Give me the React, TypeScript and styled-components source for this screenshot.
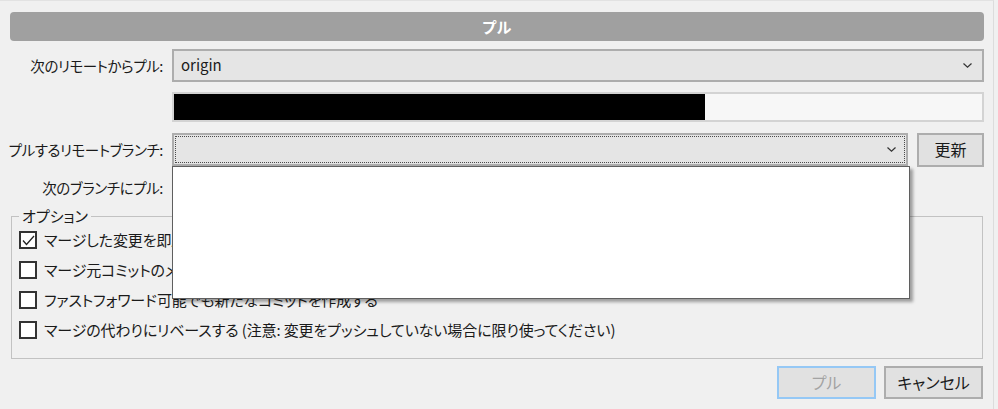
import React from "react";
import styled, { createGlobalStyle } from "styled-components";

const GlobalStyle = createGlobalStyle`
  html, body { margin: 0; padding: 0; background: #f0f0f0; }
  body {
    font-family: "Noto Sans CJK JP", "Noto Sans", sans-serif;
    font-feature-settings: "palt";
    color: #1a1a1a;
  }
  * { box-sizing: border-box; }
`;

const Window = styled.div`
  width: 994px;
  height: 409px;
  border-top: 1px solid #e2e2e2;
  border-right: 1px solid #dcdcdc;
  padding: 11px 9px 0 10px;
  display: flex;
  flex-direction: column;
  overflow: hidden;
`;

const TitleBar = styled.div`
  height: 29px;
  border-radius: 4px;
  background: #a0a0a0;
  color: #ffffff;
  font-size: 15px;
  font-weight: bold;
  display: flex;
  align-items: center;
  justify-content: center;
  letter-spacing: 0.5px;
`;

const FormGrid = styled.div`
  margin-top: 8px;
  display: grid;
  grid-template-columns: 153px 1fr 67px;
  grid-template-rows: 33px 31px 33px 24px;
  column-gap: 9px;
  row-gap: 10px;
`;

const Label = styled.div`
  font-size: 14.5px;
  letter-spacing: -0.4px;
  text-align: right;
  display: flex;
  align-items: center;
  justify-content: flex-end;
  white-space: nowrap;
  padding-bottom: 1px;
`;

const Combo = styled.div<{ $span: number; $focused?: boolean }>`
  grid-column: span ${(p) => p.$span};
  position: relative;
  background: #e5e5e5;
  border: 2px solid #adadad;
  display: flex;
  align-items: center;
  justify-content: space-between;
  padding: 0 9px 0 7px;
  font-size: 15px;
  outline: ${(p) => (p.$focused ? "1px dotted #4a4a4a" : "none")};
  outline-offset: -4px;
`;

const ComboText = styled.span`
  padding-bottom: 2px;
`;

const Chevron = () => (
  <svg width="11" height="7" viewBox="0 0 11 7">
    <polyline points="1.5,1.5 5.5,5.2 9.5,1.5" fill="none" stroke="#333" strokeWidth="1.2" />
  </svg>
);

const Spacer = styled.div``;

const Progress = styled.div`
  grid-column: span 2;
  height: 30px;
  border: 2px solid #d3d3d3;
  background: #f7f7f7;
  display: flex;
`;

const ProgressFill = styled.div<{ $value: number }>`
  width: ${(p) => p.$value * 100}%;
  background: #000000;
`;

const Button = styled.button<{ $primary?: boolean; $disabled?: boolean }>`
  font-family: inherit;
  font-feature-settings: "palt";
  font-size: 16px;
  background: #e1e1e1;
  border: 2px solid ${(p) => (p.$primary ? "#95c8f5" : "#adadad")};
  color: ${(p) => (p.$disabled ? "#a3a3a3" : "#1a1a1a")};
  padding: 0 0 2px;
  margin: 0;
  display: flex;
  align-items: center;
  justify-content: center;
`;

const RefreshButton = styled(Button)`
  height: 34px;
`;

const DropList = styled.div`
  position: absolute;
  left: -2px;
  top: calc(100% + 2px);
  width: 738px;
  height: 133px;
  background: #ffffff;
  border: 1px solid #5f5f5f;
  box-shadow: 3px 3px 3px rgba(0, 0, 0, 0.35);
  z-index: 10;
`;

const Options = styled.fieldset`
  margin: 7px 1px 0 1px;
  padding: 0 7px 13px 7px;
  border: 1px solid #c2c2c2;
  min-width: 0;
`;

const Legend = styled.legend`
  font-size: 15px;
  line-height: 18px;
  padding: 0 3px;
`;

const OptionRow = styled.label`
  height: 30px;
  display: flex;
  align-items: center;
  gap: 7px;
  font-size: 15px;
  letter-spacing: -0.12px;
  white-space: nowrap;
`;

const Box = styled.span`
  width: 18px;
  height: 18px;
  border: 2px solid #333333;
  background: #ffffff;
  display: flex;
  align-items: center;
  justify-content: center;
  flex: none;
`;

const OptionText = styled.span`
  padding-bottom: 2px;
`;

const CheckMark = () => (
  <svg width="13" height="11" viewBox="0 0 13 11">
    <polyline points="1,5.5 4.5,9.5 12,1" fill="none" stroke="#222" strokeWidth="1.3" />
  </svg>
);

const Footer = styled.div`
  margin-top: 7px;
  display: flex;
  justify-content: flex-end;
  gap: 8px;
  padding-right: 1px;
`;

const FooterButton = styled(Button)`
  width: 99px;
  height: 33px;
`;

const options = [
  { text: "マージした変更を即座にコミットする", checked: true },
  { text: "マージ元コミットのメッセージを含める", checked: false },
  { text: "ファストフォワード可能でも新たなコミットを作成する", checked: false },
  {
    text: "マージの代わりにリベースする (注意: 変更をプッシュしていない場合に限り使ってください)",
    checked: false,
  },
];

export default function App() {
  return (
    <>
      <GlobalStyle />
      <Window>
        <TitleBar>プル</TitleBar>
        <FormGrid>
          <Label>次のリモートからプル:</Label>
          <Combo $span={2}>
            <ComboText>origin</ComboText>
            <Chevron />
          </Combo>

          <Spacer />
          <Progress>
            <ProgressFill $value={0.657} />
          </Progress>

          <Label>プルするリモートブランチ:</Label>
          <Combo $span={1} $focused>
            <ComboText />
            <Chevron />
            <DropList />
          </Combo>
          <RefreshButton>更新</RefreshButton>

          <Label>次のブランチにプル:</Label>
        </FormGrid>

        <Options>
          <Legend>オプション</Legend>
          {options.map((o) => (
            <OptionRow key={o.text}>
              <Box>{o.checked && <CheckMark />}</Box>
              <OptionText>{o.text}</OptionText>
            </OptionRow>
          ))}
        </Options>

        <Footer>
          <FooterButton $primary $disabled>
            プル
          </FooterButton>
          <FooterButton>キャンセル</FooterButton>
        </Footer>
      </Window>
    </>
  );
}
